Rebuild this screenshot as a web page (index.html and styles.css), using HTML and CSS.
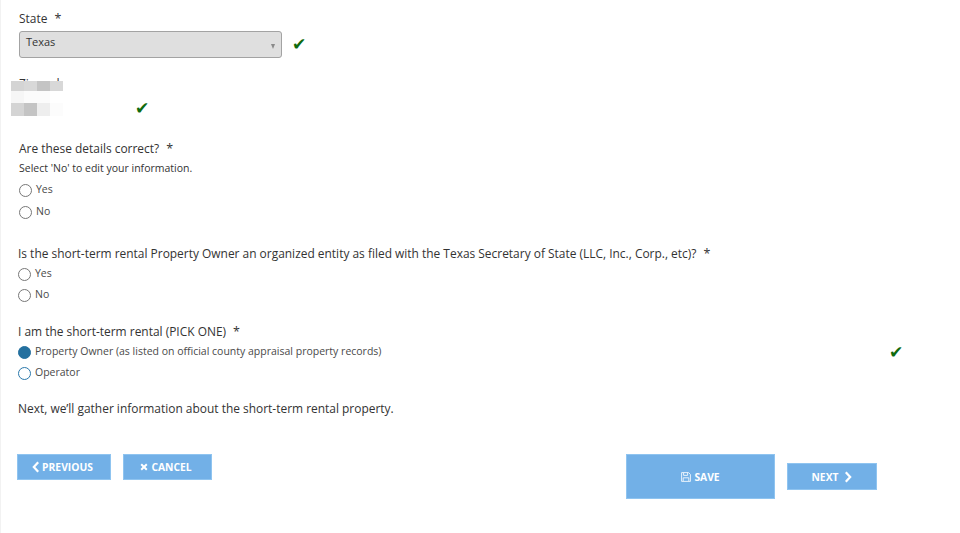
FILE: index.html
```html
<!DOCTYPE html>
<html lang="en">
<head>
<meta charset="utf-8">
<title>Registration</title>
<link rel="stylesheet" href="styles.css">
</head>
<body>
<main class="page">
  <section class="state">
    <div class="label">State<span class="req">*</span></div>
    <div class="state-row">
      <div class="select"><span>Texas</span><span class="caret"></span></div>
      <span class="check check-state">✔</span>
    </div>
  </section>

  <section class="zip">
    <div class="zip-label">Zip code</div>
    <div class="mosaic">
      <div class="mosaic-row row-a"><i class="m2"></i><i class="m1"></i><i class="m3"></i><i class="m1"></i><i class="m0"></i></div>
      <div class="mosaic-row row-b"><i class="m5"></i><i class="m6"></i><i class="m6"></i><i class="m0"></i><i class="m0"></i></div>
      <div class="mosaic-row row-c"><i class="m2"></i><i class="m3"></i><i class="m4"></i><i class="m7"></i><i class="m0"></i></div>
    </div>
    <div class="zip-row"><span class="check">✔</span></div>
  </section>

  <section class="group correct">
    <div class="label">Are these details correct?<span class="req">*</span></div>
    <div class="hint">Select 'No' to edit your information.</div>
    <div class="radio"><span class="dot"></span>Yes</div>
    <div class="radio"><span class="dot"></span>No</div>
  </section>

  <section class="group entity">
    <div class="label">Is the short-term rental Property Owner an organized entity as filed with the Texas Secretary of State (LLC, Inc., Corp., etc)?<span class="req">*</span></div>
    <div class="radio"><span class="dot"></span>Yes</div>
    <div class="radio"><span class="dot"></span>No</div>
  </section>

  <section class="group role">
    <div class="label">I am the short-term rental (PICK ONE)<span class="req">*</span></div>
    <div class="radio role-row"><span class="dot dot-on"></span>Property Owner (as listed on official county appraisal property records)<span class="check check-role">✔</span></div>
    <div class="radio"><span class="dot dot-blue"></span>Operator</div>
  </section>

  <p class="next-note">Next, we’ll gather information about the short-term rental property.</p>

  <nav class="actions">
    <div class="actions-left">
      <button class="btn btn-prev" type="button"><svg class="chev" viewBox="0 0 8 12"><path d="M6.2 1.2 1.8 6 6.2 10.8"/></svg>PREVIOUS</button>
      <button class="btn btn-cancel" type="button"><svg class="cross" viewBox="0 0 8 8"><path d="M1.2 1.2 6.8 6.8M6.8 1.2 1.2 6.8"/></svg>CANCEL</button>
    </div>
    <div class="actions-right">
      <button class="btn btn-save" type="button"><svg class="disk" viewBox="0 0 10 10"><path d="M.6.6h7l1.8 1.8v7H.6zM2.6.8v2.6h4V.8M2.2 9.2V5.8h5.6v3.4"/></svg>SAVE</button>
      <button class="btn btn-next" type="button">NEXT<svg class="chev chev-next" viewBox="0 0 8 12"><path d="M1.8 1.2 6.2 6 1.8 10.8"/></svg></button>
    </div>
  </nav>
</main>
</body>
</html>
```

FILE: styles.css
```css
* { box-sizing: border-box; }
html, body { margin: 0; height: 100%; background: #fff; }
body {
  font-family: "Open Sans", "DejaVu Sans", sans-serif;
  color: #333;
  overflow: hidden;
}
.page {
  width: 960px;
  height: 533px;
  border-left: 1px solid #f2f2f2;
  padding: 10px 0 0 17px;
}
.label { font-size: 11.95px; line-height: 18px; color: #333; }
.req { margin-left: 7px; font-size: 12.5px; }
.state .label { margin-left: 1px; }
.state-row { display: flex; align-items: center; margin: 3px 0 0 1px; }
.select {
  width: 263px;
  height: 27px;
  display: flex;
  justify-content: space-between;
  padding: 1px 6px 0 6px;
  background: #dfdfdf;
  border: 1px solid #a3a3a3;
  border-radius: 3px;
  font-size: 11px;
  line-height: 18px;
}
.caret {
  margin-top: 11px;
  border-left: 2.5px solid transparent;
  border-right: 2.5px solid transparent;
  border-top: 5px solid #8a8a8a;
  width: 0;
  height: 0;
}
.check { color: #0f6b0f; font-size: 17px; line-height: 18px; font-family: "DejaVu Sans", sans-serif; }
.check-state { margin: -2px 0 0 10px; }
.zip { position: relative; height: 54px; margin: 17px 0 0 -7px; }
.zip-label { font-size: 12px; line-height: 18px; margin-left: 8px; }
.mosaic { position: absolute; left: 0; top: 6px; display: flex; flex-direction: column; }
.mosaic-row { display: flex; }
.mosaic-row i { display: block; width: 13px; }
.row-a i { height: 10px; }
.row-b i { height: 12px; }
.row-c i { height: 13px; }
.zip-row { display: flex; align-items: center; height: 14px; margin: 8px 0 0 124px; }
.m0 { background: #fff; }
.m1 { background: #d8d8d8; }
.m2 { background: #d4d4d4; }
.m3 { background: #c4c4c4; }
.m4 { background: #eeeeee; }
.m5 { background: #f6f6f6; }
.m6 { background: #fbfbfb; }
.m7 { background: #fcfcfc; }
.hint { font-size: 10.5px; line-height: 16px; margin-top: 2px; }
.radio {
  display: flex;
  align-items: center;
  font-size: 10.5px;
  line-height: 15px;
  height: 21px;
  color: #4a4a4a;
}
.dot {
  width: 13px;
  height: 13px;
  margin-right: 4px;
  margin-top: 2px;
  border: 1px solid #777;
  border-radius: 50%;
  flex: none;
}
.dot-on { background: #24709f; border-color: #24709f; }
.dot-blue { border-color: #2a78ab; }
.correct { margin: 11px 0 0 1px; }
.correct .hint + .radio { margin-top: 3px; }
.correct .radio + .radio { margin-top: 1px; }
.entity { margin-top: 23px; }
.entity .label + .radio { margin-top: 0; }
.role { margin-top: 18px; }
.role .label + .radio { margin-top: 0; }
.role-row { position: relative; }
.check-role { position: absolute; left: 871px; top: 2px; }
.next-note { margin: 17px 0 0; font-size: 11.95px; line-height: 18px; }
.actions {
  display: flex;
  justify-content: space-between;
  width: 860px;
  margin: 36px 0 0 -1px;
}
.actions-left { display: flex; gap: 12px; align-items: flex-start; }
.actions-right { display: flex; gap: 12px; align-items: center; }
.btn {
  display: flex;
  align-items: center;
  justify-content: center;
  padding: 0;
  border: 1px solid #8fc4f0;
  background: #72b0e7;
  color: #fff;
  font: 700 10.3px/14px "Open Sans", sans-serif;
}
.btn-prev { width: 94px; height: 26px; padding-right: 3px; }
.btn-cancel { width: 89px; height: 26px; padding-right: 3px; }
.btn-save { width: 149px; height: 45px; }
.btn-next { width: 90px; height: 27px; padding-left: 0; }
svg { fill: none; stroke: #fff; }
.chev { width: 8px; height: 12px; stroke-width: 2.2; margin-right: 2px; }
.chev-next { margin: 0 0 0 6px; }
.cross { width: 8px; height: 8px; stroke-width: 2; margin-right: 3px; }
.disk { width: 10px; height: 10px; stroke-width: 1; margin-right: 3px; stroke: #e6f1fb; }
```
